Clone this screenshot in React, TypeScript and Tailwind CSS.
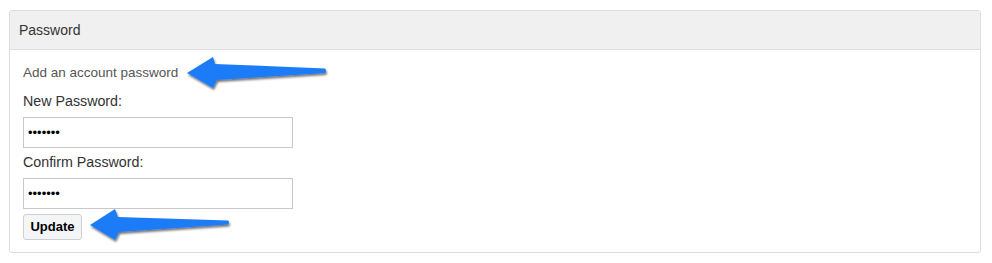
import { useState } from "react";

// Annotation arrows drawn over the form
function Arrows() {
  return (
    <svg
      className="absolute left-0 top-0 pointer-events-none"
      width="992"
      height="263"
      viewBox="0 0 992 263"
    >
      <defs>
        <filter id="arrowShadow" x="-10%" y="-30%" width="120%" height="180%">
          <feDropShadow dx="1" dy="2" stdDeviation="1.2" floodColor="#000" floodOpacity="0.55" />
        </filter>
      </defs>
      <path
        d="M187,73 L213,57 L215,64 L325,68.5 Q327,70.5 325,73 L217,80 L213,88 Z"
        fill="#1f7cf7"
        filter="url(#arrowShadow)"
      />
      <path
        d="M90,225 L115,209 L118,217 L228,220.5 Q230,222.5 228,224.5 L119,232 L115,240 Z"
        fill="#1f7cf7"
        filter="url(#arrowShadow)"
      />
    </svg>
  );
}

export default function App() {
  const [newPassword, setNewPassword] = useState("1234567");
  const [confirmPassword, setConfirmPassword] = useState("1234567");

  return (
    <div
      className="relative w-[992px] h-[263px] bg-white pt-[10px] pl-[9px]"
      style={{ fontFamily: '"Liberation Sans", Arial, sans-serif' }}
    >
      <section className="w-[972px] border border-[#dddddd] rounded-[3px] overflow-hidden">
        <div className="h-[39px] flex items-center pl-[9px] bg-[#f0f0f0] border-b border-[#dddddd] text-[14px] text-[#333333]">
          Password
        </div>

        <div className="pt-[14px] pb-[12px] pl-[13px]">
          <p className="h-[18px] leading-[18px] text-[13.5px] text-[#555555]">
            Add an account password
          </p>

          <label className="block mt-[10px] h-[18px] leading-[18px] text-[14.25px] text-[#333333]">
            New Password:
          </label>
          <input
            type="password"
            value={newPassword}
            onChange={(e) => setNewPassword(e.target.value)}
            className="block mt-[7px] w-[270px] h-[31px] px-[4px] border border-[#c8c8c8] bg-white text-[13px] text-black outline-none"
          />

          <label className="block mt-[5px] h-[18px] leading-[18px] text-[14.25px] text-[#333333]">
            Confirm Password:
          </label>
          <input
            type="password"
            value={confirmPassword}
            onChange={(e) => setConfirmPassword(e.target.value)}
            className="block mt-[7px] w-[270px] h-[31px] px-[4px] border border-[#c8c8c8] bg-white text-[13px] text-black outline-none"
          />

          <button className="block mt-[5px] h-[26px] w-[59px] rounded-[3px] border border-[#cfcfcf] bg-[#f4f5f7] text-[13px] font-bold text-black">
            Update
          </button>
        </div>
      </section>

      <Arrows />
    </div>
  );
}
